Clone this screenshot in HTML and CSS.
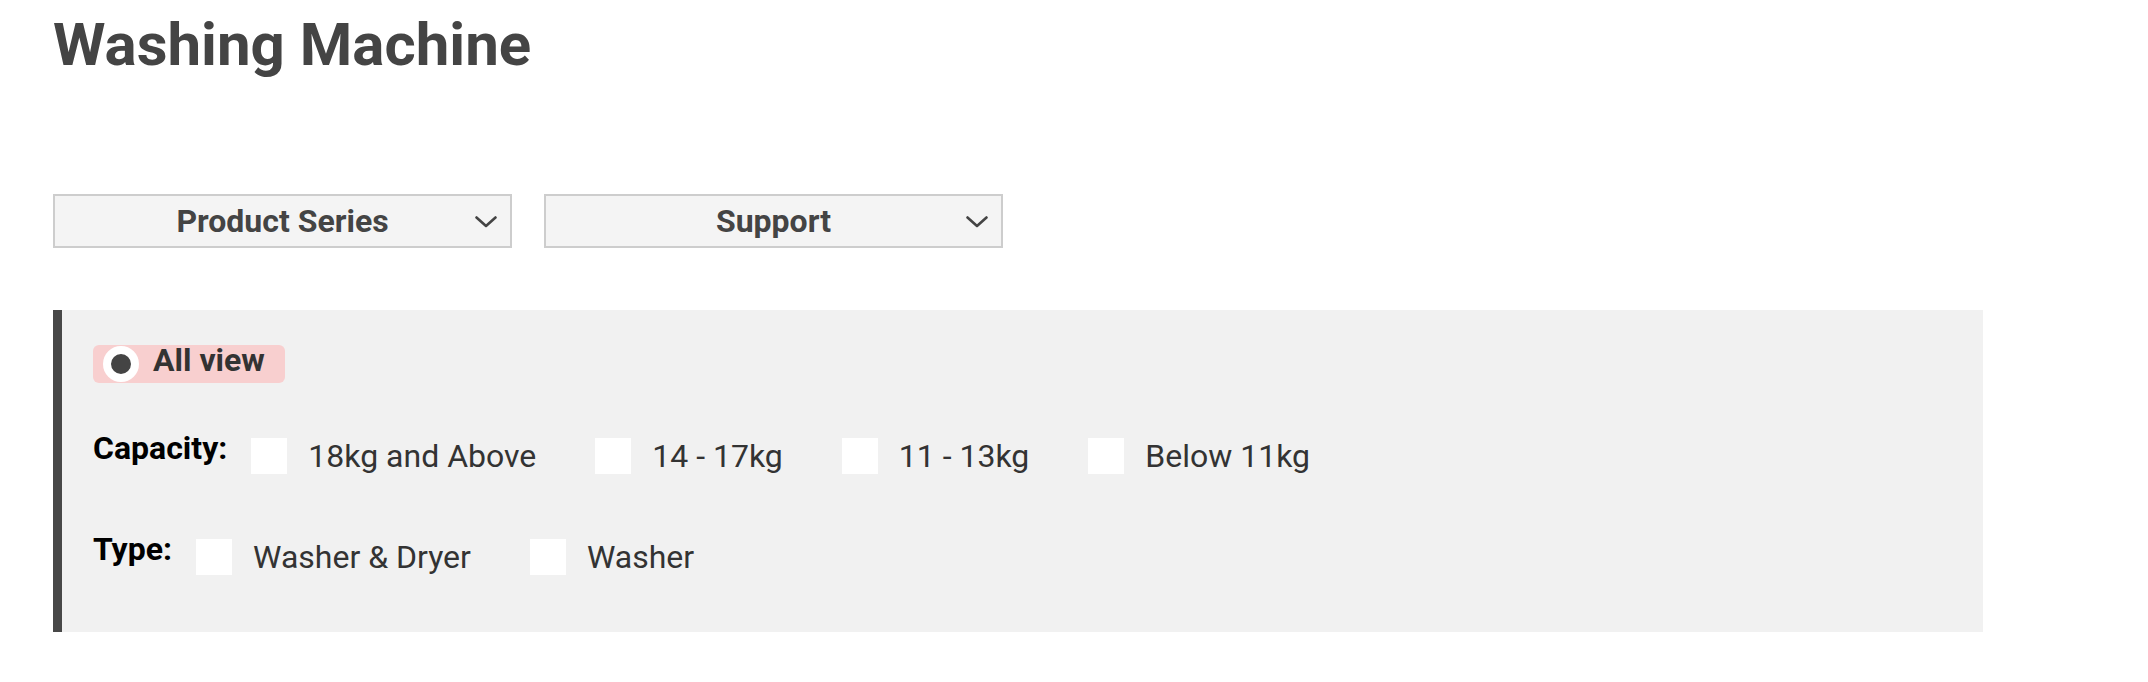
FILE: index.html
```html
<!DOCTYPE html>
<html lang="en">
<head>
<meta charset="utf-8">
<title>Washing Machine</title>
<link rel="stylesheet" href="styles.css">
</head>
<body>
<div class="page">
  <h1 class="title">Washing Machine</h1>
  <div class="dropdowns">
    <div class="dropdown">
      <span class="dd-label">Product Series</span>
      <svg class="chevron" width="22" height="12" viewBox="0 0 22 12"><polyline points="1.5,1.5 11,10 20.5,1.5" fill="none" stroke="#444" stroke-width="2.6" stroke-linecap="round" stroke-linejoin="round"/></svg>
    </div>
    <div class="dropdown">
      <span class="dd-label">Support</span>
      <svg class="chevron" width="22" height="12" viewBox="0 0 22 12"><polyline points="1.5,1.5 11,10 20.5,1.5" fill="none" stroke="#444" stroke-width="2.6" stroke-linecap="round" stroke-linejoin="round"/></svg>
    </div>
  </div>
  <section class="filters">
    <div class="all-view">
      <span class="radio"></span>
      <span class="all-text">All view</span>
    </div>
    <div class="filter-row capacity">
      <span class="row-label">Capacity:</span>
      <div class="options">
        <label class="option"><span class="box"></span><span class="opt-text">18kg and Above</span></label>
        <label class="option"><span class="box"></span><span class="opt-text">14 - 17kg</span></label>
        <label class="option"><span class="box"></span><span class="opt-text">11 - 13kg</span></label>
        <label class="option"><span class="box"></span><span class="opt-text">Below 11kg</span></label>
      </div>
    </div>
    <div class="filter-row type">
      <span class="row-label">Type:</span>
      <div class="options">
        <label class="option"><span class="box"></span><span class="opt-text">Washer &amp; Dryer</span></label>
        <label class="option"><span class="box"></span><span class="opt-text">Washer</span></label>
      </div>
    </div>
  </section>
</div>
</body>
</html>
```
FILE: styles.css
```css
* { box-sizing: border-box; }
html, body { margin: 0; padding: 0; background: #fff; }
body { font-family: Roboto, "Noto Sans", "Liberation Sans", sans-serif; }

.page {
  padding: 15px 0 0 53px;
}

.title {
  margin: 0;
  font-size: 60px;
  line-height: 60px;
  font-weight: 700;
  color: #444;
}

.dropdowns {
  display: flex;
  gap: 32px;
  margin-top: 119px;
}

.dropdown {
  width: 459px;
  height: 54px;
  border: 2px solid #cdcdcd;
  background: #f4f4f4;
  display: grid;
  grid-template-columns: 1fr auto 1fr;
  align-items: center;
}
.dd-label {
  grid-column: 2;
  font-size: 32px;
  font-weight: 700;
  color: #444;
  line-height: 1;
}
.chevron {
  grid-column: 3;
  justify-self: end;
  margin-right: 13px;
  margin-top: 2px;
}

.filters {
  margin-top: 62px;
  width: 1930px;
  background: #f1f1f1;
  border-left: 9px solid #484848;
  padding: 35px 0 57px 31px;
}

.all-view {
  display: inline-flex;
  align-items: center;
  height: 38px;
  background: #f8cfcf;
  border-radius: 6px;
  padding: 0 20px 0 10px;
  gap: 14px;
  vertical-align: top;
}
.radio {
  width: 36px;
  height: 36px;
  border-radius: 50%;
  background: #444;
  border: 8px solid #fff;
}
.all-text {
  font-size: 32px;
  font-weight: 700;
  color: #333;
  line-height: 1;
  margin-top: -8px;
}

.filter-row {
  display: flex;
  align-items: flex-start;
  gap: 24px;
}
.capacity { margin-top: 55px; }
.type { margin-top: 65px; }

.row-label {
  font-size: 32px;
  font-weight: 700;
  color: #000;
  line-height: 20px;
}

.options {
  display: flex;
  align-items: center;
  gap: 59px;
}
.option {
  display: flex;
  align-items: center;
  gap: 21px;
}
.box {
  width: 36px;
  height: 36px;
  background: #fff;
  flex: none;
}
.opt-text {
  font-size: 32px;
  line-height: 36px;
  color: #333;
}
```
